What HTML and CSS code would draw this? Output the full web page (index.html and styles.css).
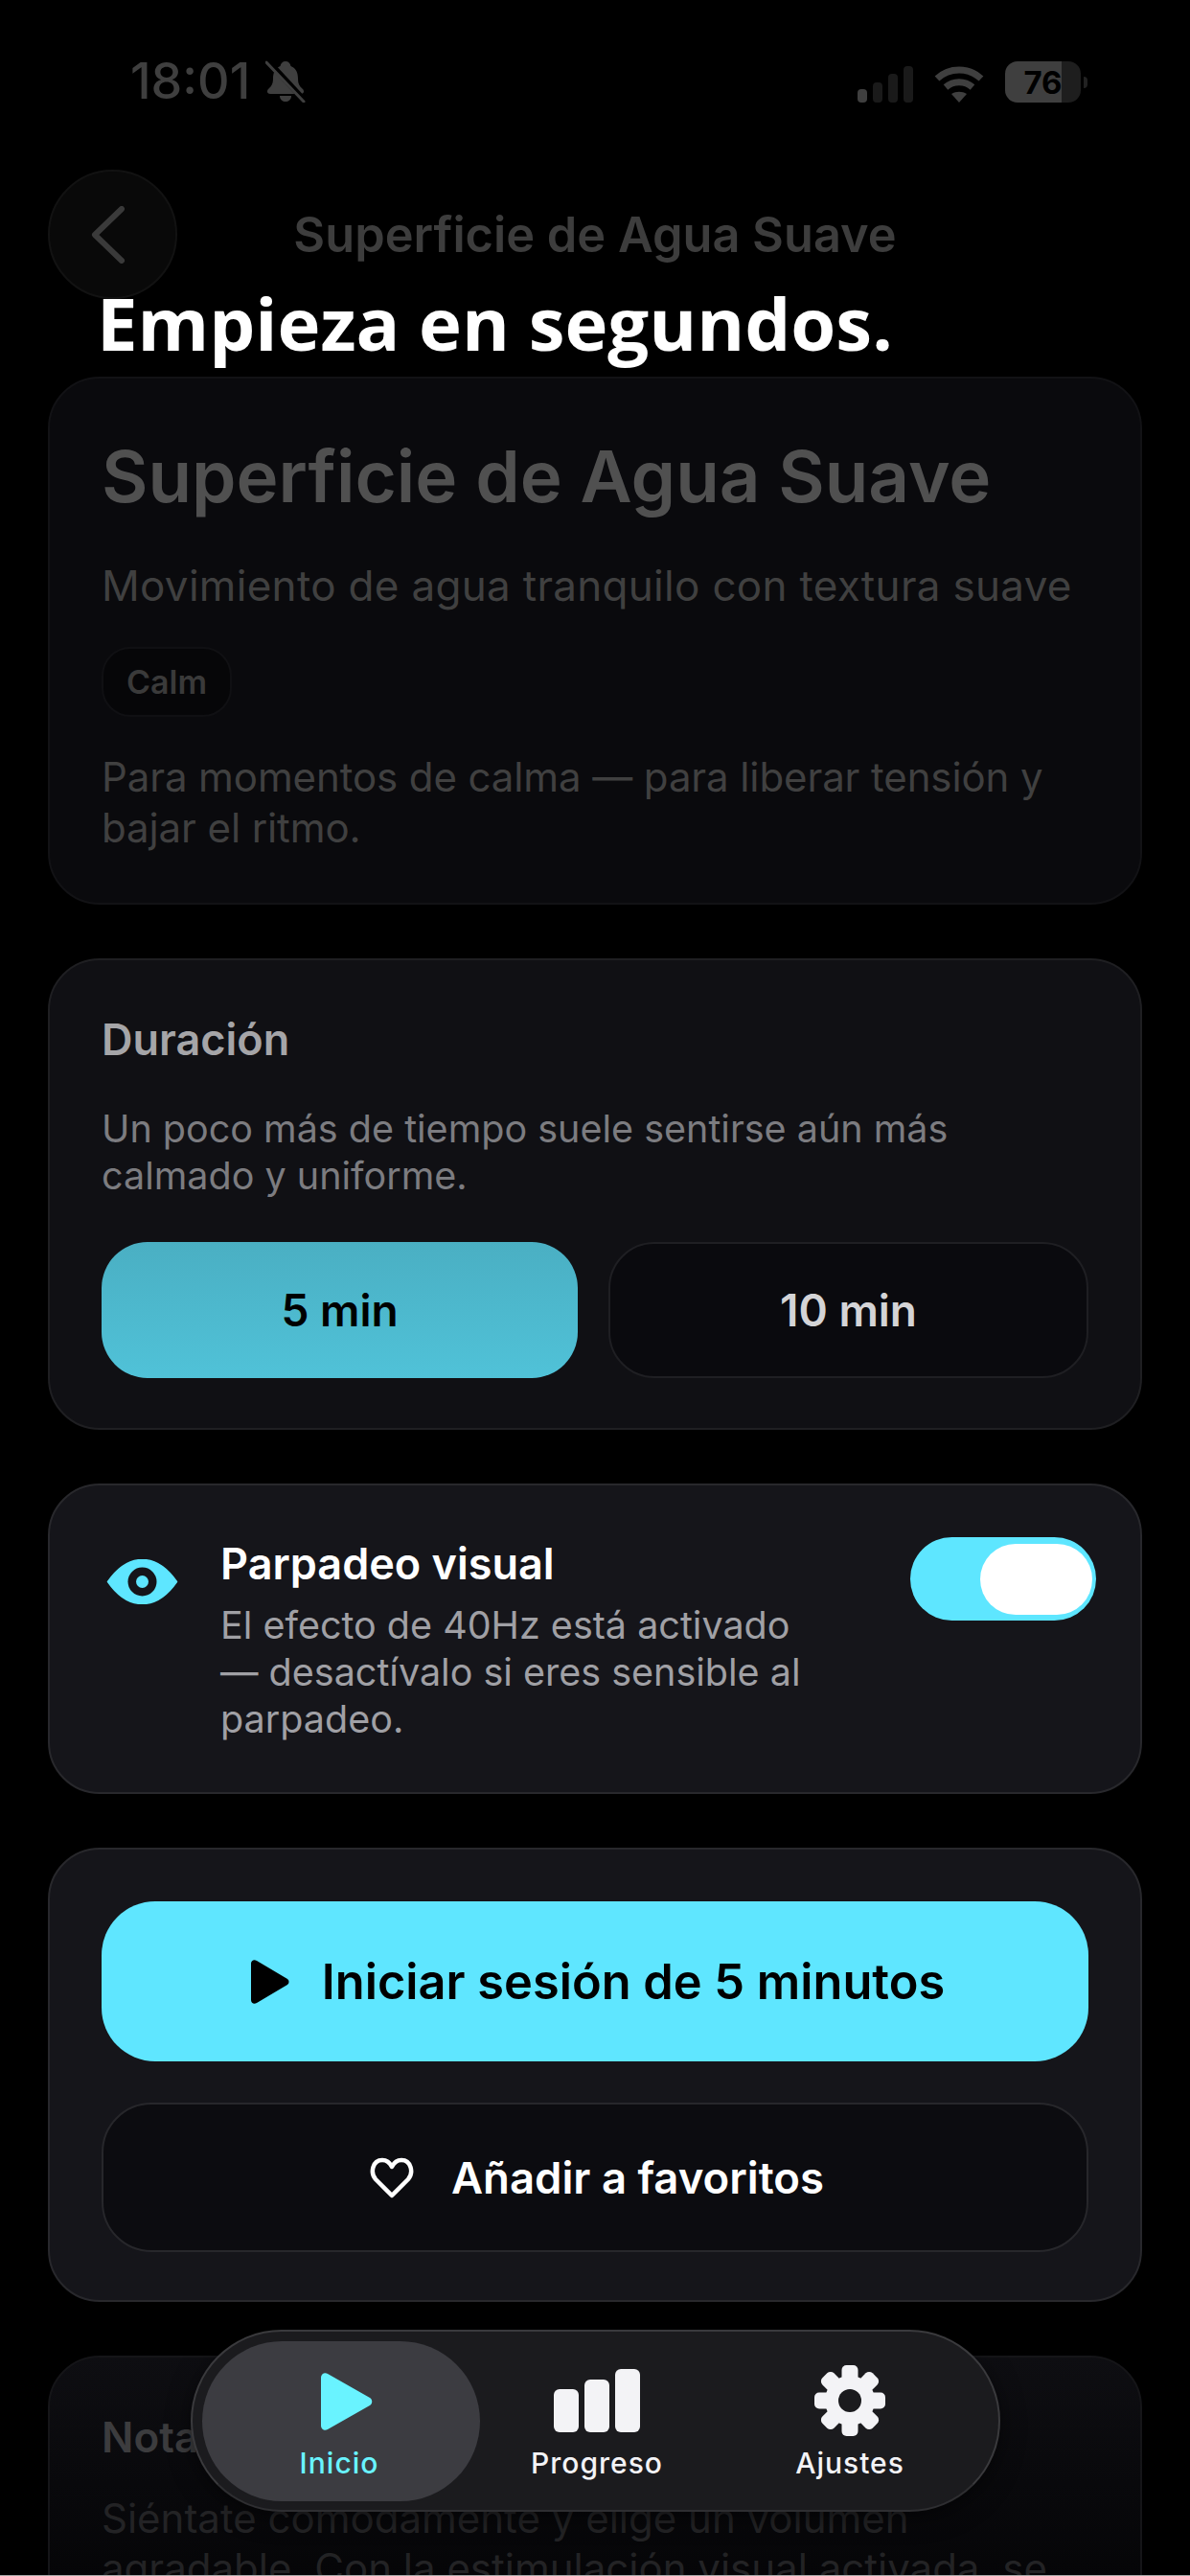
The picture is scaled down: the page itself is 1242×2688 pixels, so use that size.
FILE: index.html
```html
<!DOCTYPE html>
<html lang="es">
<head>
    <meta charset="utf-8">
    <title>Superficie de Agua Suave</title>
    <link rel="stylesheet" href="styles.css">
</head>
<body>
    <div class="screen">
        <div class="status-bar">
            <div class="status-left">
                <span class="time">18:01</span>
                <svg class="bell" width="42" height="44" viewBox="0 0 42 44">
                    <path d="M21 1c-3 0-5 2-5.500 5C10 8 8 13 8 19c0 5-1.500 8-5 11-2 2-1 5 2 5h32c3 0 4-3 2-5-3.500-3-5-6-5-11 0-6-2-11-7.500-13C26 3 24 1 21 1z" fill="#3f3f3f"/>
                    <path d="M15 37h12c0 4-3 6-6 6s-6-2-6-6z" fill="#3f3f3f"/>
                    <path d="M3 1l37 40" stroke="#000" stroke-width="6"/>
                    <path d="M1 2l39 41" stroke="#3f3f3f" stroke-width="3" stroke-linecap="round"/>
                </svg>
            </div>
            <div class="status-right">
                <div class="signal">
                    <span class="sig sig-1"></span>
                    <span class="sig sig-2"></span>
                    <span class="sig sig-3"></span>
                    <span class="sig sig-4"></span>
                </div>
                <svg class="wifi" width="52" height="38" viewBox="0 0 52 38" fill="none" stroke="#3f3f3f" stroke-width="7">
                    <path d="M3 13c13-12 33-12 46 0"/>
                    <path d="M12 22c8-7 20-7 28 0"/>
                    <path d="M26 38l-8-9c5-3 11-3 16 0z" fill="#3f3f3f" stroke="none"/>
                </svg>
                <div class="battery">
                    <div class="battery-body"><span class="battery-level">76</span></div>
                    <span class="battery-nub"></span>
                </div>
            </div>
        </div>

        <div class="top-bar">
            <div class="back-btn">
                <svg width="36" height="60" viewBox="0 0 36 60" fill="none" stroke="#3a3a3a" stroke-width="6" stroke-linecap="round" stroke-linejoin="round">
                    <path d="M32 3L4 30l28 27"/>
                </svg>
            </div>
            <div class="top-title">Superficie de Agua Suave</div>
        </div>

        <h1 class="caption">Empieza en segundos.</h1>

        <div class="cards">
            <section class="card card-intro">
                <h2 class="intro-title">Superficie de Agua Suave</h2>
                <p class="intro-sub">Movimiento de agua tranquilo con textura suave</p>
                <span class="chip">Calm</span>
                <p class="intro-text">Para momentos de calma — para liberar tensión y bajar el ritmo.</p>
            </section>

            <section class="card card-duration">
                <h3 class="section-title">Duración</h3>
                <p class="section-text">Un poco más de tiempo suele sentirse aún más calmado y uniforme.</p>
                <div class="duration-row">
                    <div class="duration-btn active">5 min</div>
                    <div class="duration-btn">10 min</div>
                </div>
            </section>

            <section class="card card-flicker">
                <svg class="eye" width="75" height="47" viewBox="0 0 75 47">
                    <path d="M1.500 23.500C13 7 25 .5 37.500 .5S62 7 73.500 23.500C62 40 50 46.500 37.500 46.500S13 40 1.500 23.500z" fill="#5ee6ff" stroke="#5ee6ff" stroke-width="1.500" stroke-linejoin="round"/>
                    <circle cx="37.500" cy="23.500" r="15" fill="#15151a"/>
                    <circle cx="37.500" cy="23.500" r="6.500" fill="#5ee6ff"/>
                </svg>
                <div class="flicker-body">
                    <div class="flicker-title">Parpadeo visual</div>
                    <p class="flicker-text">El efecto de 40Hz está activado — desactívalo si eres sensible al parpadeo.</p>
                </div>
                <div class="toggle"><span class="toggle-knob"></span></div>
            </section>

            <section class="card card-actions">
                <div class="start-btn">
                    <svg width="42" height="46" viewBox="0 0 42 46">
                        <path d="M2 4c0-3 3-5 6-3l32 19c2 1.500 2 4.500 0 6L8 45c-3 2-6 0-6-3z" fill="#000"/>
                    </svg>
                    <span>Iniciar sesión de 5 minutos</span>
                </div>
                <div class="fav-btn">
                    <svg width="46" height="43" viewBox="0 0 46 43" fill="none" stroke="#fff" stroke-width="4.500" stroke-linejoin="round">
                        <path d="M23 40L6 23C0 16 3 3 13 3c5 0 8 3 10 7 2-4 5-7 10-7 10 0 13 13 7 20z"/>
                    </svg>
                    <span>Añadir a favoritos</span>
                </div>
            </section>

            <section class="card card-note">
                <h3 class="note-title">Nota</h3>
                <p class="note-text">Siéntate cómodamente y elige un volumen agradable. Con la estimulación visual activada, se</p>
            </section>
        </div>

        <nav class="tab-bar">
            <div class="tab tab-active">
                <svg width="56" height="62" viewBox="0 0 56 62">
                    <path d="M1 6c0-4 4-6 7-4l44 25c3 2 3 6 0 8L8 60c-3 2-7 0-7-4z" fill="#69f3ff"/>
                </svg>
                <span class="tab-label">Inicio</span>
            </div>
            <div class="tab tab-progress">
                <svg width="90" height="66" viewBox="0 0 90 66" fill="#f3f3f6">
                    <rect x="0" y="21" width="26" height="45" rx="6"/>
                    <rect x="32" y="11" width="26" height="55" rx="6"/>
                    <rect x="64" y="0" width="26" height="66" rx="6"/>
                </svg>
                <span class="tab-label">Progreso</span>
            </div>
            <div class="tab tab-settings">
                <svg width="74" height="74" viewBox="-37 -37 74 74" fill="#f3f3f6">
                    <circle r="26"/>
                    <rect x="-8.500" y="-37" width="17" height="20" rx="5"/>
                    <rect x="-8.500" y="-37" width="17" height="20" rx="5" transform="rotate(45)"/>
                    <rect x="-8.500" y="-37" width="17" height="20" rx="5" transform="rotate(90)"/>
                    <rect x="-8.500" y="-37" width="17" height="20" rx="5" transform="rotate(135)"/>
                    <rect x="-8.500" y="-37" width="17" height="20" rx="5" transform="rotate(180)"/>
                    <rect x="-8.500" y="-37" width="17" height="20" rx="5" transform="rotate(225)"/>
                    <rect x="-8.500" y="-37" width="17" height="20" rx="5" transform="rotate(270)"/>
                    <rect x="-8.500" y="-37" width="17" height="20" rx="5" transform="rotate(315)"/>
                    <circle r="12" fill="#1b1b1e"/>
                </svg>
                <span class="tab-label">Ajustes</span>
            </div>
        </nav>

        <div class="bottom-edge"></div>
    </div>
</body>
</html>
```

FILE: styles.css
```css
* {
    box-sizing: border-box;
}
html, body {
    margin: 0;
    background-color: #000;
}
body {
    font-family: Inter, "Liberation Sans", sans-serif;
}
h1, h2, h3, p {
    margin: 0;
    font-weight: inherit;
}
.screen {
    position: relative;
    width: 1242px;
    height: 2688px;
    overflow: hidden;
    background-color: #000;
}

/* status bar */
.status-bar {
    height: 177px;
    padding: 60px 107px 0 136px;
    display: flex;
    justify-content: space-between;
    align-items: flex-start;
}
.status-left {
    display: flex;
    align-items: center;
    gap: 16px;
    height: 50px;
}
.time {
    font-size: 52px;
    line-height: 50px;
    font-weight: 500;
    color: #3f3f3f;
}
.status-right {
    display: flex;
    align-items: flex-end;
    gap: 22px;
    height: 47px;
}
.signal {
    display: flex;
    align-items: flex-end;
    gap: 6px;
}
.sig {
    display: block;
    width: 10px;
    border-radius: 4px;
    background-color: #1a1a1a;
}
.sig-1 { height: 14px; background-color: #3f3f3f; }
.sig-2 { height: 21px; }
.sig-3 { height: 30px; }
.sig-4 { height: 38px; }
.battery {
    display: flex;
    align-items: center;
    gap: 3px;
}
.battery-body {
    width: 79px;
    height: 43px;
    border-radius: 13px;
    background: linear-gradient(90deg, #3f3f3f 75%, #1e1e1e 75%);
    display: flex;
    align-items: center;
    justify-content: center;
}
.battery-level {
    font-size: 33px;
    font-weight: 700;
    color: #000;
}
.battery-nub {
    display: block;
    width: 4px;
    height: 12px;
    border-radius: 0 4px 4px 0;
    background-color: #222;
}

/* header */
.top-bar {
    height: 135px;
    margin: 0 50px;
    display: flex;
    align-items: center;
    position: relative;
}
.back-btn {
    width: 135px;
    height: 135px;
    border-radius: 50%;
    background-color: #090909;
    border: 2px solid #121212;
    display: flex;
    align-items: center;
    padding-left: 43px;
}
.top-title {
    flex: 1;
    text-align: center;
    margin-left: -135px;
    font-size: 50.500px;
    font-weight: 600;
    color: #3d3d3d;
}
.caption {
    position: absolute;
    left: 101px;
    top: 287px;
    font-family: "Open Sans", sans-serif;
    font-size: 76px;
    line-height: 100px;
    font-weight: 700;
    color: #fff;
}

/* cards */
.cards {
    margin: 81px 50px 0;
    display: flex;
    flex-direction: column;
    gap: 56px;
}
.card {
    border-radius: 54px;
    border: 2px solid #1b1b1e;
    padding: 54px;
    background-color: #131317;
}
.card-intro {
    height: 551px;
    background-color: #0a0a0d;
    border-color: #121215;
}
.intro-title {
    font-size: 74.500px;
    line-height: 96px;
    font-weight: 600;
    color: #505050;
}
.intro-sub {
    margin-top: 39px;
    font-size: 44px;
    line-height: 54px;
    letter-spacing: .3px;
    color: #404040;
}
.chip {
    display: inline-block;
    margin-top: 37px;
    height: 73px;
    padding: 0 24px;
    border-radius: 30px;
    border: 2px solid #101013;
    background-color: #060608;
    font-size: 34px;
    line-height: 69px;
    font-weight: 600;
    color: #3a3a3a;
}
.intro-text {
    margin-top: 36px;
    font-size: 42px;
    line-height: 53px;
    letter-spacing: -.1px;
    color: #404040;
}
.card-duration {
    height: 492px;
    background-color: #101014;
    border-color: #1f1f22;
}
.section-title {
    font-size: 45px;
    line-height: 58px;
    font-weight: 600;
    color: #a5a5a8;
}
.section-text {
    margin-top: 40px;
    font-size: 39.500px;
    line-height: 49px;
    color: #7c7c80;
}
.duration-row {
    margin-top: 44px;
    display: flex;
    gap: 32px;
}
.duration-btn {
    flex: 1;
    height: 142px;
    border-radius: 48px;
    border: 2px solid #1f1f23;
    background-color: #0a0a0e;
    display: flex;
    align-items: center;
    justify-content: center;
    font-size: 46px;
    font-weight: 600;
    color: #d4d4d6;
}
.duration-btn.active {
    border: none;
    background: linear-gradient(180deg, #4aafc3, #50c2d8);
    color: #000;
}
.card-flicker {
    height: 324px;
    background-color: #15151a;
    border-color: #28282c;
    display: flex;
    align-items: flex-start;
}
.eye {
    margin: 23px 0 0 5px;
    flex-shrink: 0;
}
.flicker-body {
    margin-left: 44px;
    width: 625px;
}
.flicker-title {
    font-size: 45px;
    line-height: 56px;
    font-weight: 600;
    color: #fff;
}
.flicker-text {
    margin-top: 12px;
    font-size: 39.500px;
    line-height: 48.800px;
    color: #a0a0a5;
}
.toggle {
    margin: 0 -8px 0 auto;
    width: 194px;
    height: 87px;
    border-radius: 44px;
    background-color: #5ee6ff;
    display: flex;
    justify-content: flex-end;
    align-items: center;
    padding-right: 4px;
}
.toggle-knob {
    display: block;
    width: 117px;
    height: 74px;
    border-radius: 37px;
    background-color: #fff;
}
.card-actions {
    height: 474px;
    background-color: #15151a;
    border-color: #28282c;
}
.start-btn {
    height: 167px;
    border-radius: 56px;
    background-color: #5fe6ff;
    padding-left: 4px;
    display: flex;
    align-items: center;
    justify-content: center;
    gap: 34px;
    font-size: 50.500px;
    font-weight: 600;
    color: #000;
}
.fav-btn {
    margin-top: 43px;
    height: 156px;
    border-radius: 52px;
    border: 2px solid #27272b;
    background-color: #0c0c10;
    padding-left: 4px;
    display: flex;
    align-items: center;
    justify-content: center;
    gap: 39px;
    font-size: 45.500px;
    font-weight: 600;
    color: #fff;
}
.card-note {
    height: 400px;
    background: linear-gradient(180deg, #0e0e12, #050507 60%);
    border-color: #151518;
}
.note-title {
    font-size: 44px;
    line-height: 58px;
    font-weight: 600;
    color: #3c3c3e;
}
.note-text {
    margin-top: 30px;
    width: 1030px;
    font-size: 42px;
    line-height: 52px;
    color: #232325;
}

/* bottom tabs, floats above the cards */
.tab-bar {
    position: absolute;
    left: 199px;
    top: 2431px;
    width: 845px;
    height: 190px;
    border-radius: 95px;
    background-color: #1b1b1e;
    border: 2px solid #3a3a3d;
    border-bottom-color: #2e2e31;
    box-shadow: 0 6px 24px rgba(0, 0, 0, .5);
    padding: 10px;
    display: flex;
}
.tab {
    height: 167px;
    display: flex;
    flex-direction: column;
    align-items: center;
    justify-content: flex-start;
}
.tab-label {
    position: absolute;
    top: 117px;
    font-size: 30px;
    line-height: 40px;
    font-weight: 500;
    letter-spacing: 1px;
    color: #f3f3f6;
}
.tab-active {
    width: 290px;
    border-radius: 84px;
    background-color: #3c3c41;
    padding-top: 32px;
}
.tab-active svg {
    margin-left: 12px;
}
.tab-active .tab-label {
    margin-left: -4px;
    color: #69f3ff;
}
.tab-progress {
    width: 244px;
    padding-top: 29px;
}
.tab-settings {
    width: 284px;
    padding-top: 25px;
}

/* 1px light row at the very bottom of the capture */
.bottom-edge {
    position: absolute;
    left: 0;
    right: 0;
    bottom: 0;
    height: 1px;
    background-color: #a8a8a8;
}
```
